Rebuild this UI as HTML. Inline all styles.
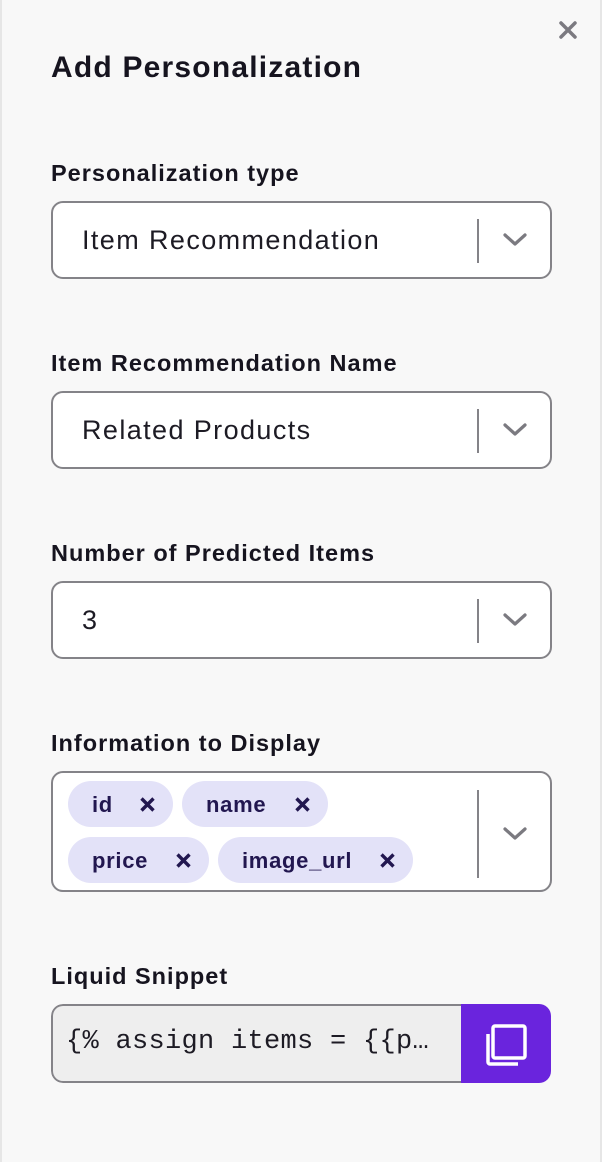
<!DOCTYPE html>
<html><head><style>
body{margin:0;width:602px;height:1162px;background:#f8f8f8;font-family:"Liberation Sans",sans-serif;position:relative;overflow:hidden;color:#16141f}
.edge{position:absolute;top:0;bottom:0;width:2px;background:#e6e6e6}
h1{position:absolute;left:51px;top:51px;margin:0;font-size:30px;font-weight:bold;letter-spacing:1.2px}
.lbl{position:absolute;left:51px;font-size:23.5px;font-weight:bold;letter-spacing:1px}
.box{position:absolute;left:51px;width:497px;border:2px solid #848388;border-radius:12px;background:#fff}
.val{position:absolute;left:29px;font-size:27px;color:#1d1b24;letter-spacing:1.4px}
.div{position:absolute;left:424px;width:2px;background:#848388}
.chev{position:absolute;left:449px}
.tag{position:absolute;height:46px;border-radius:23px;background:#e3e2f8;color:#221750;font-weight:bold;font-size:22px;line-height:48px;letter-spacing:0.7px}
.tag span{position:absolute;top:0}
.tag svg{position:absolute;top:15px}
</style></head><body>
<div class="edge" style="left:0"></div><div class="edge" style="right:0"></div>
<svg style="position:absolute;left:558px;top:20px" width="20" height="20" viewBox="0 0 20 20"><path d="M3 3L17 17M17 3L3 17" stroke="#7b7a80" stroke-width="3.5" stroke-linecap="round"/></svg>
<h1>Add Personalization</h1>

<div class="lbl" style="top:160px">Personalization type</div>
<div class="box" style="top:201px;height:74px"><div class="val" style="top:22px">Item Recommendation</div><div class="div" style="top:16px;height:44px"></div><svg class="chev" style="top:29px" width="26" height="16" viewBox="0 0 26 16"><path d="M3 3L13 12L23 3" fill="none" stroke="#7b7a80" stroke-width="3.2" stroke-linecap="round" stroke-linejoin="round"/></svg></div>

<div class="lbl" style="top:350px">Item Recommendation Name</div>
<div class="box" style="top:391px;height:74px"><div class="val" style="top:22px">Related Products</div><div class="div" style="top:16px;height:44px"></div><svg class="chev" style="top:29px" width="26" height="16" viewBox="0 0 26 16"><path d="M3 3L13 12L23 3" fill="none" stroke="#7b7a80" stroke-width="3.2" stroke-linecap="round" stroke-linejoin="round"/></svg></div>

<div class="lbl" style="top:540px">Number of Predicted Items</div>
<div class="box" style="top:581px;height:74px"><div class="val" style="top:22px">3</div><div class="div" style="top:16px;height:44px"></div><svg class="chev" style="top:29px" width="26" height="16" viewBox="0 0 26 16"><path d="M3 3L13 12L23 3" fill="none" stroke="#7b7a80" stroke-width="3.2" stroke-linecap="round" stroke-linejoin="round"/></svg></div>

<div class="lbl" style="top:730px">Information to Display</div>
<div class="box" style="top:771px;height:117px"><div class="div" style="top:17px;height:88px"></div><svg class="chev" style="top:53px" width="26" height="16" viewBox="0 0 26 16"><path d="M3 3L13 12L23 3" fill="none" stroke="#7b7a80" stroke-width="3.2" stroke-linecap="round" stroke-linejoin="round"/></svg></div>
<div class="tag" style="left:68px;top:781px;width:105px"><span style="left:24px">id</span><svg style="left:71px" width="17" height="17"><path d="M2.5 2.5L14.5 14.5M14.5 2.5L2.5 14.5" stroke="#221750" stroke-width="3.4"/></svg></div>
<div class="tag" style="left:182px;top:781px;width:146px"><span style="left:24px">name</span><svg style="left:112px" width="17" height="17"><path d="M2.5 2.5L14.5 14.5M14.5 2.5L2.5 14.5" stroke="#221750" stroke-width="3.4"/></svg></div>
<div class="tag" style="left:68px;top:837px;width:141px"><span style="left:24px">price</span><svg style="left:107px" width="17" height="17"><path d="M2.5 2.5L14.5 14.5M14.5 2.5L2.5 14.5" stroke="#221750" stroke-width="3.4"/></svg></div>
<div class="tag" style="left:218px;top:837px;width:195px"><span style="left:24px">image_url</span><svg style="left:161px" width="17" height="17"><path d="M2.5 2.5L14.5 14.5M14.5 2.5L2.5 14.5" stroke="#221750" stroke-width="3.4"/></svg></div>

<div class="lbl" style="top:963px">Liquid Snippet</div>
<div style="position:absolute;left:51px;top:1004px;width:500px;height:79px;border-radius:12px;overflow:hidden">
<div style="position:absolute;left:0;top:0;width:408px;height:75px;background:#eeeeee;border:2px solid #848388;border-right:none;border-radius:12px 0 0 12px"></div>
<div style="position:absolute;left:15px;top:23px;font-family:'Liberation Mono',monospace;font-size:27px;color:#1d1b24;white-space:pre;letter-spacing:0.3px">{% assign items = {{p…</div>
<div style="position:absolute;left:410px;top:0;width:90px;height:79px;background:#6a24dd"></div>
<svg style="position:absolute;left:433px;top:19px" width="44" height="44" viewBox="0 0 44 44"><rect x="9" y="3" width="32" height="32" rx="2" fill="none" stroke="#fff" stroke-width="3.5"/><path d="M4 11V39a2 2 0 0 0 2 2H34" fill="none" stroke="#fff" stroke-width="3.5"/></svg>
</div>
</body></html>
